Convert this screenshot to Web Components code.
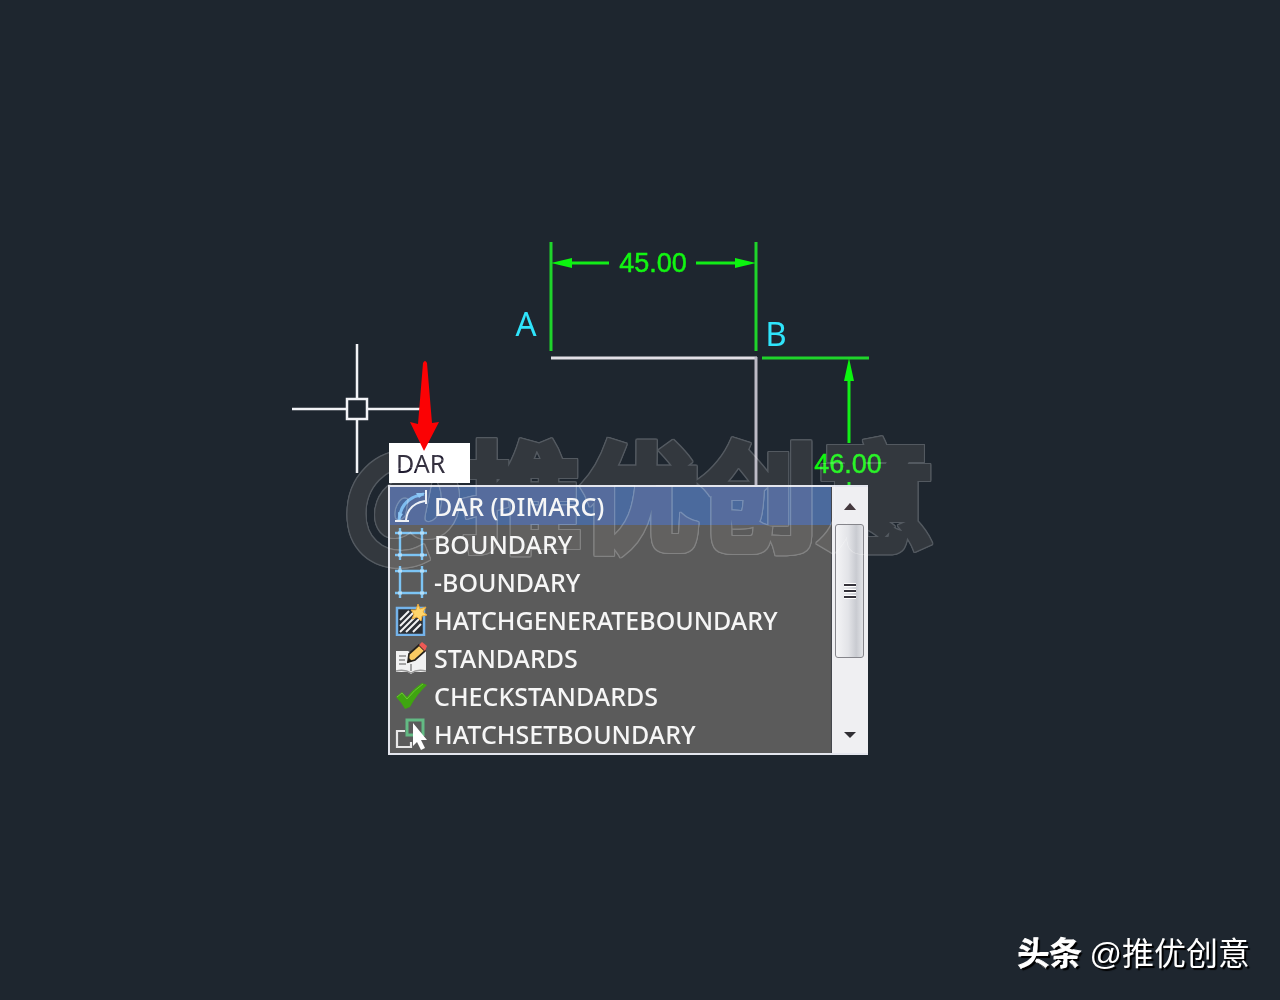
<!DOCTYPE html>
<html lang="zh-CN">
<head>
<meta charset="utf-8">
<title>CAD 命令提示</title>
<style>
body { margin: 0; background: #1e262f; }
</style>
</head>
<body>
<cad-app></cad-app>
<script>
const define = (name, html) => customElements.define(name, class extends HTMLElement {
  constructor() {
    super();
    this.attachShadow({ mode: "open" }).innerHTML = html;
  }
});

/* Line work: dimensions, walls, crosshair */
define("cad-drawing", `
<style>
:host { display: block; }
svg { display: block; width: 100%; height: 100%; overflow: visible; }
text { font-family: "Liberation Sans", Arial, sans-serif; }
.dim { font-size: 27px; fill: #12f512; stroke: #12f512; stroke-width: .5px; text-anchor: middle; }
.pt { font-family: "Noto Sans", sans-serif; font-size: 33px; fill: #2fe4fb; text-anchor: middle; }
</style>
<svg viewBox="290 240 700 520" role="img" aria-label="CAD drawing">
  <g fill="none" stroke="#1fd42b" stroke-width="3">
    <path d="M551 242V351M756 242V351M762 358H869"/>
    <path d="M565 263H609M696 263H742M849 372V443M849 482V488" stroke="#12ee18"/>
  </g>
  <g fill="#0cf50f">
    <path d="M551 263L572 258V268ZM756 263L735 258V268ZM849 358L844 381H854Z"/>
  </g>
  <text class="dim" x="653" y="272">45.00</text>
  <text class="dim" x="848" y="473">46.00</text>
  <text class="pt" x="526" y="336">A</text>
  <text class="pt" x="776" y="346">B</text>
  <g fill="none" stroke-width="3">
    <path d="M551 358H757" stroke="#e2dfe6"/>
    <path d="M756 357V487" stroke="#bdbbc6"/>
    <path d="M357 344V398M357 419V473M292 409H346M368 409H420M347 399H367V419H347Z" stroke="#f2f3f6" stroke-width="2.5"/>
  </g>
</svg>`);

define("red-arrow", `
<style>
:host { display: block; }
svg { display: block; }
</style>
<svg width="30" height="92" viewBox="0 0 30 92" aria-hidden="true">
  <path d="M13 3Q15-1 17 3L22 63L29 62L14 91L0 62L8 64Z" fill="#fb0204"/>
</svg>`);

define("big-mark", `
<style>
:host {
  display: block; white-space: nowrap; pointer-events: none;
  font: 700 118px/120px "Noto Sans CJK SC", sans-serif;
  color: #787470; -webkit-text-stroke: 6px #787470; paint-order: stroke fill;
  filter: drop-shadow(1px 0 0 #fff) drop-shadow(-1px 0 0 #fff) drop-shadow(0 1px 0 #fff) drop-shadow(0 -1px 0 #fff);
  opacity: .24; mix-blend-mode: lighten;
}
</style>
<slot></slot>`);

define("corner-mark", `
<style>
:host {
  display: flex; align-items: center; gap: 8px; color: #fff;
  font: 400 32px/48px "Liberation Sans", "Noto Sans CJK SC", sans-serif;
  text-shadow: 2px 2px 1px #000;
}
b { font-weight: 700; -webkit-text-stroke: 1px #fff; paint-order: stroke fill; }
</style>
<b><slot name="brand"></slot></b><span><slot></slot></span>`);

const icons = {
  arc: `<path d="M4 30C5 16 13 7 29 4" fill="none" stroke="#7fbdf0" stroke-width="3"/>
    <path d="M11 30C12 20 18 13 30 11" fill="none" stroke="#eef1f6" stroke-width="2"/>
    <path d="M31 0V14M0 31H14" stroke="#eef1f6" stroke-width="2"/>
    <path d="M30 3L21 3L24 8ZM4 30L3 22L8 24Z" fill="#8fc8f5"/>`,
  bound: `<path d="M5 0V32M27 0V32M0 5H32M0 27H32" stroke="#7cc4f4" stroke-width="2.4"/>
    <path d="M3 5H7M25 5H29M3 27H7M25 27H29" stroke="#b3def8" stroke-width="3"/>`,
  hatch: `<rect x="2" y="4" width="27" height="27" fill="#2b2f35" stroke="#74b3ea" stroke-width="2.500"/>
    <path d="M5 16L14 7M5 22L20 7M5 28L25 8M11 28L26 13M18 28L26 20" stroke="#f2f2f2" stroke-width="2"/>
    <path d="M23 0L25 5L31 3L28 8L32 11L27 12L26 17L22 13L17 15L19 10L16 6L21 6Z" fill="#ffd56b" stroke="#e9a93c"/>`,
  book: `<path d="M1 9H13L16 11L19 9H31V30H19L16 32L13 30H1Z" fill="#f2f2f2"/>
    <path d="M1 29Q10 27 16 31Q22 27 31 29" fill="none" stroke="#999" stroke-width="1.500"/>
    <path d="M4 14H11M4 18H10M4 22H11M16 22V29" stroke="#8b8b8b" stroke-width="1.500"/>
    <path d="M14 12L24 3L30 9L20 18L13 20Z" fill="#f9ca62" stroke="#25211c" stroke-width="1.700"/>
    <path d="M24 3L27 0L32 4L30 9Z" fill="#ef5a55"/>
    <path d="M12 21L14 16L17 19Z" fill="#25211c"/>`,
  check: `<path d="M1 17L7 12L12 17Q18 9 27 3L32 5Q22 14 15 27L10 29Q6 22 1 17Z" fill="#3fa510"/>
    <path d="M2 17L7 13L12 19Q19 10 28 4" fill="none" stroke="#6cc433" stroke-width="1"/>`,
  pick: `<path d="M10 13H2V29H16V24" fill="none" stroke="#e8e8e8" stroke-width="2.200"/>
    <path d="M18 17H12V2H28V18" fill="none" stroke="#63ba84" stroke-width="3"/>
    <path d="M18 5V28L22 24L26 32L30 30L26 22H32Z" fill="#fff"/>`
};

customElements.define("command-item", class extends HTMLElement {
  connectedCallback() {
    this.attachShadow({ mode: "open" }).innerHTML = `
<style>
:host { display: block; }
button {
  display: flex; align-items: center; gap: 7px; width: 100%; height: 38px;
  padding: 0 5px; border: 0; background: none; color: #f6f6f6; text-align: left;
  font: 500 25px/38px "Noto Sans", "Open Sans", sans-serif; white-space: nowrap;
}
:host([active]) button { background: #4b6a9d; }
svg { flex: none; width: 32px; height: 32px; }
</style>
<button type="button"><svg viewBox="0 0 32 32" aria-hidden="true">${icons[this.getAttribute("icon")]}</svg><span><slot></slot></span></button>`;
  }
});

define("scroll-rail", `
<style>
:host { display: flex; flex-direction: column; width: 29px; padding: 0 4px 0 3px; background: #efeff2; }
button { border: 0; padding: 0; background: none; height: 37px; display: grid; place-items: center; }
button svg { width: 14px; height: 8px; }
.thumb {
  box-sizing: border-box; height: 134px; border: 1px solid #85858b; border-radius: 3px;
  background: linear-gradient(90deg, #f4f4f6, #e3e4e8 45%, #c9cbd1 75%, #e2e3e7);
  display: grid; place-items: center;
}
.thumb svg { width: 14px; height: 16px; }
.rest { flex: 1; }
</style>
<button type="button" aria-label="Up"><svg viewBox="0 0 14 8"><path d="M1 8L7 1L13 8Z" fill="#34252f"/></svg></button>
<div class="thumb"><svg viewBox="0 0 14 16"><path d="M1 2H13M1 8H13M1 14H13" stroke="#fff" stroke-width="4"/><path d="M1 2H13M1 8H13M1 14H13" stroke="#35333b" stroke-width="2"/></svg></div>
<div class="rest"></div>
<button type="button" aria-label="Down"><svg viewBox="0 0 14 8"><path d="M1 1H13L7 7Z" fill="#2f2e33"/></svg></button>`);

define("command-list", `
<style>
:host { display: flex; border: 2px solid #e4e6ee; border-right: 0; background: #5b5b5b; }
.items { flex: 1; border-right: 1px solid #44464c; }
</style>
<div class="items"><slot></slot></div><scroll-rail></scroll-rail>`);

define("command-prompt", `
<style>
:host { display: flex; flex-direction: column; align-items: stretch; gap: 2px; }
input {
  box-sizing: border-box; width: 81px; height: 40px; margin-left: 1px; padding: 0 7px; border: 0;
  background: #fff; color: #201c30; font: 400 25px/40px "Noto Sans", "Open Sans", sans-serif; outline: 0;
}
</style>
<input type="text" value="DAR" aria-label="Command">
<slot></slot>`);

define("cad-app", `
<style>
:host { display: grid; min-height: 100vh; overflow: hidden; }
.scene, corner-mark { grid-area: 1 / 1; }
.scene { place-self: center; position: relative; width: 700px; height: 520px; }
cad-drawing { height: 100%; }
/* windows and marks floating on the drawing */
command-prompt { position: absolute; left: 98px; top: 203px; width: 480px; }
red-arrow { position: absolute; left: 120px; top: 120px; }
big-mark { position: absolute; left: 54px; top: 191px; }
corner-mark { place-self: end; padding: 0 30px 22px 0; }
</style>
<div class="scene">
  <cad-drawing></cad-drawing>
  <command-prompt>
    <command-list>
      <command-item icon="arc" active>DAR (DIMARC)</command-item>
      <command-item icon="bound">BOUNDARY</command-item>
      <command-item icon="bound">-BOUNDARY</command-item>
      <command-item icon="hatch">HATCHGENERATEBOUNDARY</command-item>
      <command-item icon="book">STANDARDS</command-item>
      <command-item icon="check">CHECKSTANDARDS</command-item>
      <command-item icon="pick">HATCHSETBOUNDARY</command-item>
    </command-list>
  </command-prompt>
  <red-arrow></red-arrow>
  <big-mark>@推优创意</big-mark>
</div>
<corner-mark><span slot="brand">头条</span>@推优创意</corner-mark>`);
</script>
</body>
</html>
